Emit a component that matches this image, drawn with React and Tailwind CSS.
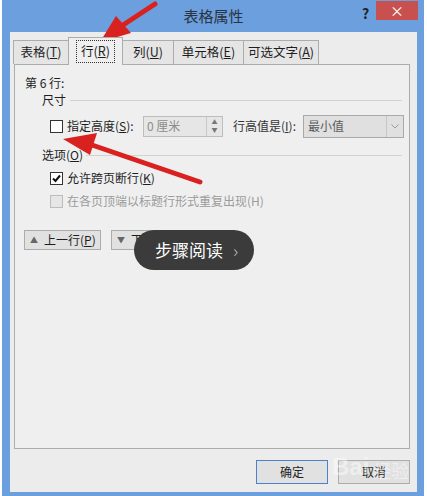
const font = "font-['Microsoft_YaHei','Noto_Sans_CJK_SC',sans-serif]";

function Tab({ label, k, w, selected }) {
    if (selected) {
        return (
            <div className={`h-[28px] ${w} -mb-px border border-b-0 border-[#acacac] bg-[#efefef] flex items-center justify-center relative z-10`}>
                <span className="px-[4px] py-[1px] border border-dotted border-[#333] whitespace-nowrap">
                    {label}(<u>{k}</u>)
                </span>
            </div>
        );
    }
    return (
        <div className={`h-[24px] ${w} border border-b-0 border-[#acacac] bg-[#e5e5e5] flex items-center justify-center -ml-px whitespace-nowrap`}>
            {label}(<u>{k}</u>)
        </div>
    );
}

function Check({ checked, disabled }) {
    return (
        <span
            className={`w-[13px] h-[13px] shrink-0 border flex items-center justify-center ${
                disabled ? "border-[#bcbcbc] bg-[#e6e6e6]" : "border-[#333] bg-white"
            }`}
        >
            {checked && (
                <svg width="11" height="11" viewBox="0 0 11 11">
                    <path d="M2 5.5 L4.5 8 L9 2.5" fill="none" stroke="#111" strokeWidth="2" />
                </svg>
            )}
        </span>
    );
}

export default function App() {
    return (
        <div className={`w-[427px] h-[496px] bg-white relative overflow-hidden flex text-[12px] text-[#1e1e1e] whitespace-nowrap ${font}`}>
            <div className="w-[2px] shrink-0" />
            <div className="w-[422px] shrink-0 h-full bg-[#6c9fdd] flex flex-col pl-[8px] pr-[7px] pb-[4px]">
                <div className="h-[32px] shrink-0 relative flex items-center justify-center">
                    <span className="text-[15px] text-[#2a3340]">表格属性</span>
                    <span className="absolute left-[352px] top-[3px] text-[14px] font-bold text-[#222]">?</span>
                    <span className="absolute left-[366px] top-[1px] w-[42px] h-[19px] bg-[#c8514f] flex items-center justify-center text-white text-[14px]">
                        ×
                    </span>
                </div>

                <div className="flex-1 bg-[#ececec] flex flex-col pl-[4px] pr-[7px] pt-[4px]">
                    <div className="flex items-end h-[28px] text-[12.5px]">
                        <Tab label="表格" k="T" w="w-[56px]" />
                        <Tab label="行" k="R" w="w-[55px] -ml-px" selected />
                        <Tab label="列" k="U" w="w-[52px]" />
                        <Tab label="单元格" k="E" w="w-[71px]" />
                        <Tab label="可选文字" k="A" w="w-[76px]" />
                    </div>

                    <div className="h-[385px] border border-[#acacac] bg-[#efefef] flex flex-col pr-[7px]">
                        <div className="mt-[10px] h-[16px] pl-[10px] flex items-center">第 6 行:</div>

                        <div className="h-[18px] pl-[27px] flex items-center gap-[4px]">
                            <span>尺寸</span>
                            <span className="flex-1 h-px bg-[#d2d2d2]" />
                        </div>

                        <div className="mt-[6px] h-[22px] pl-[35px] flex items-center">
                            <Check />
                            <span className="ml-[4px] w-[72px] shrink-0">指定高度(<u>S</u>):</span>
                            <div className="ml-[4px] w-[80px] shrink-0 h-[21px] border border-[#bdbdbd] bg-[#e6e6e6] flex">
                                <span className="flex-1 pl-[3px] flex items-center text-[#8c8c8c]">0 厘米</span>
                                <span className="w-[16px] border-l border-[#c8c8c8] flex flex-col items-center justify-center text-[#777] text-[6px] leading-[8px]">
                                    <span>▲</span>
                                    <span>▼</span>
                                </span>
                            </div>
                            <span className="ml-[10px] w-[66px] shrink-0 text-[#333]">行高值是(<u>I</u>):</span>
                            <div className="ml-[4px] w-[101px] shrink-0 h-[23px] border border-[#a9a9a9] bg-[#e0e0e0] flex">
                                <span className="flex-1 pl-[4px] flex items-center text-[#5a5a5a]">最小值</span>
                                <span className="w-[17px] border-l border-[#c6c6c6] flex items-center justify-center">
                                    <svg width="8" height="5" viewBox="0 0 8 5">
                                        <path d="M0.5 0.5 L4 4 L7.5 0.5" fill="none" stroke="#9a9a9a" strokeWidth="1" />
                                    </svg>
                                </span>
                            </div>
                        </div>

                        <div className="mt-[9px] h-[18px] pl-[27px] flex items-center gap-[3px]">
                            <span>选项(<u>O</u>)</span>
                            <span className="flex-1 h-px bg-[#d2d2d2]" />
                        </div>

                        <div className="mt-[5px] h-[18px] pl-[35px] flex items-center">
                            <Check checked />
                            <span className="ml-[4px]">允许跨页断行(<u>K</u>)</span>
                        </div>

                        <div className="mt-[5px] h-[18px] pl-[35px] flex items-center">
                            <Check disabled />
                            <span className="ml-[4px] text-[#9b9b9b]">在各页顶端以标题行形式重复出现(H)</span>
                        </div>

                        <div className="mt-[20px] pl-[9px] flex gap-[10px]">
                            <div className="w-[77px] h-[20px] border border-[#acacac] bg-[#e1e1e1] flex items-center pl-[5px] gap-[6px]">
                                <span className="text-[8px] text-[#666]">▲</span>
                                <span>上一行(<u>P</u>)</span>
                            </div>
                            <div className="w-[80px] h-[20px] border border-[#acacac] bg-[#e1e1e1] flex items-center pl-[5px] gap-[6px]">
                                <span className="text-[8px] text-[#666]">▼</span>
                                <span>下一行(<u>N</u>)</span>
                            </div>
                        </div>
                    </div>

                    <div className="mt-[11px] flex justify-end gap-[10px]">
                        <div className="w-[72px] h-[24px] border border-[#4b82c8] bg-[#e1e1e1] flex items-center justify-center">确定</div>
                        <div className="w-[72px] h-[24px] border border-[#adadad] bg-[#e1e1e1] flex items-center justify-center">取消</div>
                    </div>
                </div>
            </div>
            <div className="flex-1 bg-white" />

            <div className="absolute left-[134px] top-[230px] w-[120px] h-[40px] rounded-full bg-[#3b3b3b] flex items-center pl-[21px] gap-[10px]">
                <span className="text-white text-[17px]">步骤阅读</span>
                <span className="text-[#bdbdbd] text-[18px] font-light">›</span>
            </div>

            <div className="absolute left-[332px] top-[455px] flex items-end gap-[4px] text-white/45 leading-none">
                <span className="text-[24px] font-['Liberation_Sans',sans-serif] font-bold">Bai</span>
                <span className="text-[18px]">经验</span>
            </div>

            <svg className="absolute inset-0 pointer-events-none" width="427" height="496" viewBox="0 0 427 496">
                <line x1="155" y1="4" x2="120" y2="27" stroke="#d9211f" strokeWidth="5" strokeLinecap="round" />
                <polygon points="100,42 116,16 131,33" fill="#d9211f" />
                <line x1="200" y1="182" x2="92" y2="145" stroke="#d9211f" strokeWidth="5" strokeLinecap="round" />
                <polygon points="63,139 97,133 90,155" fill="#d9211f" />
            </svg>
        </div>
    );
}
